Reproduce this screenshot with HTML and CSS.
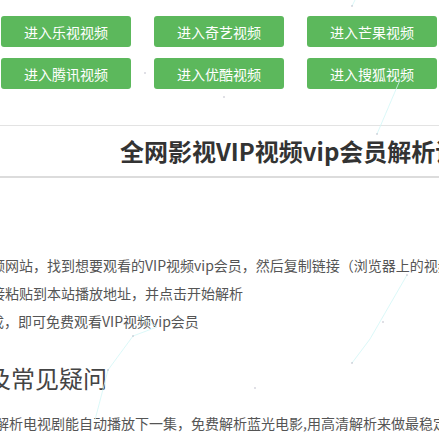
FILE: index.html
```html
<!DOCTYPE html>
<html lang="zh-CN">
<head>
<meta charset="utf-8">
<title>全网影视VIP视频vip会员解析</title>
<link rel="stylesheet" href="styles.css">
</head>
<body>
<div class="page">
  <nav class="nav">
    <a class="btn" href="#">进入乐视视频</a>
    <a class="btn" href="#">进入奇艺视频</a>
    <a class="btn" href="#">进入芒果视频</a>
    <a class="btn" href="#">进入腾讯视频</a>
    <a class="btn" href="#">进入优酷视频</a>
    <a class="btn" href="#">进入搜狐视频</a>
  </nav>
  <header class="title-bar">
    <h1 class="title">全网影视VIP视频vip会员解析说明</h1>
  </header>
  <ol class="steps">
    <li class="step step-1">频网站，找到想要观看的VIP视频vip会员，然后复制链接（浏览器上的视频地址）</li>
    <li class="step step-2">接粘贴到本站播放地址，并点击开始解析</li>
    <li class="step step-3">成，即可免费观看VIP视频vip会员</li>
  </ol>
  <h2 class="faq-title">及常见疑问</h2>
  <p class="faq-text">解析电视剧能自动播放下一集，免费解析蓝光电影,用高清解析来做最稳定的视频解析</p>
</div>
<svg class="particles" width="439" height="440" viewBox="0 0 439 440" aria-hidden="true">
  <g stroke="#d2f6f6" stroke-width="0.8" fill="none">
    <line x1="360" y1="-10" x2="352" y2="6"/>
    <line x1="400" y1="80" x2="377" y2="134"/>
    <line x1="407" y1="275" x2="370" y2="339"/>
    <line x1="370" y1="339" x2="352" y2="363"/>
    <line x1="157" y1="327" x2="133" y2="336"/>
    <line x1="133" y1="336" x2="108" y2="370"/>
    <line x1="108" y1="370" x2="95" y2="420"/>
    <line x1="137" y1="315" x2="157" y2="327"/>
  </g>
  <g fill="#aab">
    <circle cx="352" cy="6" r="0.7"/>
    <circle cx="145" cy="73" r="0.7"/>
    <circle cx="224" cy="97" r="0.7"/>
    <circle cx="377" cy="134" r="0.7"/>
    <circle cx="407" cy="275" r="0.7"/>
    <circle cx="383" cy="322" r="0.7"/>
    <circle cx="133" cy="336" r="0.7"/>
    <circle cx="108" cy="370" r="0.7"/>
    <circle cx="352" cy="363" r="0.7"/>
    <circle cx="255" cy="388" r="0.7"/>
  </g>
</svg>
</body>
</html>
```
FILE: styles.css
```css
html, body {
  margin: 0;
  padding: 0;
  background: #fff;
  overflow: hidden;
}
body {
  font-family: "Noto Sans CJK SC", "Noto Sans", "Liberation Sans", sans-serif;
  color: #555;
  width: 439px;
  height: 440px;
  position: relative;
}
.page {
  overflow: hidden;
  width: 439px;
}
.nav {
  display: grid;
  grid-template-columns: repeat(3, 130px);
  column-gap: 23px;
  row-gap: 11px;
  padding: 16px 0 0 1px;
}
.btn {
  display: flex;
  align-items: center;
  justify-content: center;
  height: 31px;
  background: #5cb85c;
  color: #fff;
  font-size: 14px;
  text-decoration: none;
  border-radius: 3px;
  white-space: nowrap;
}
.title-bar {
  margin-top: 36px;
  border-top: 1px solid #e3e3e3;
  border-bottom: 2px solid #dcdcdc;
  height: 50px;
  overflow: hidden;
}
.title {
  margin: 0;
  padding-left: 120px;
  font-size: 24px;
  line-height: 50px;
  font-weight: bold;
  color: #333;
  white-space: nowrap;
}
.steps {
  list-style: none;
  margin: 73px 0 0;
  padding: 0;
}
.step {
  font-size: 14px;
  line-height: 28px;
  white-space: nowrap;
  color: #555;
  margin-left: -9px;
}
.step-3 { margin-left: -10px; }
.faq-title {
  margin: 26px 0 0 -13px;
  font-size: 24px;
  line-height: 34px;
  font-weight: normal;
  color: #444;
  white-space: nowrap;
}
.faq-text {
  margin: 14px 0 0 -5px;
  font-size: 14px;
  line-height: 28px;
  color: #555;
  white-space: nowrap;
}
.particles {
  position: absolute;
  left: 0;
  top: 0;
  pointer-events: none;
}
```
